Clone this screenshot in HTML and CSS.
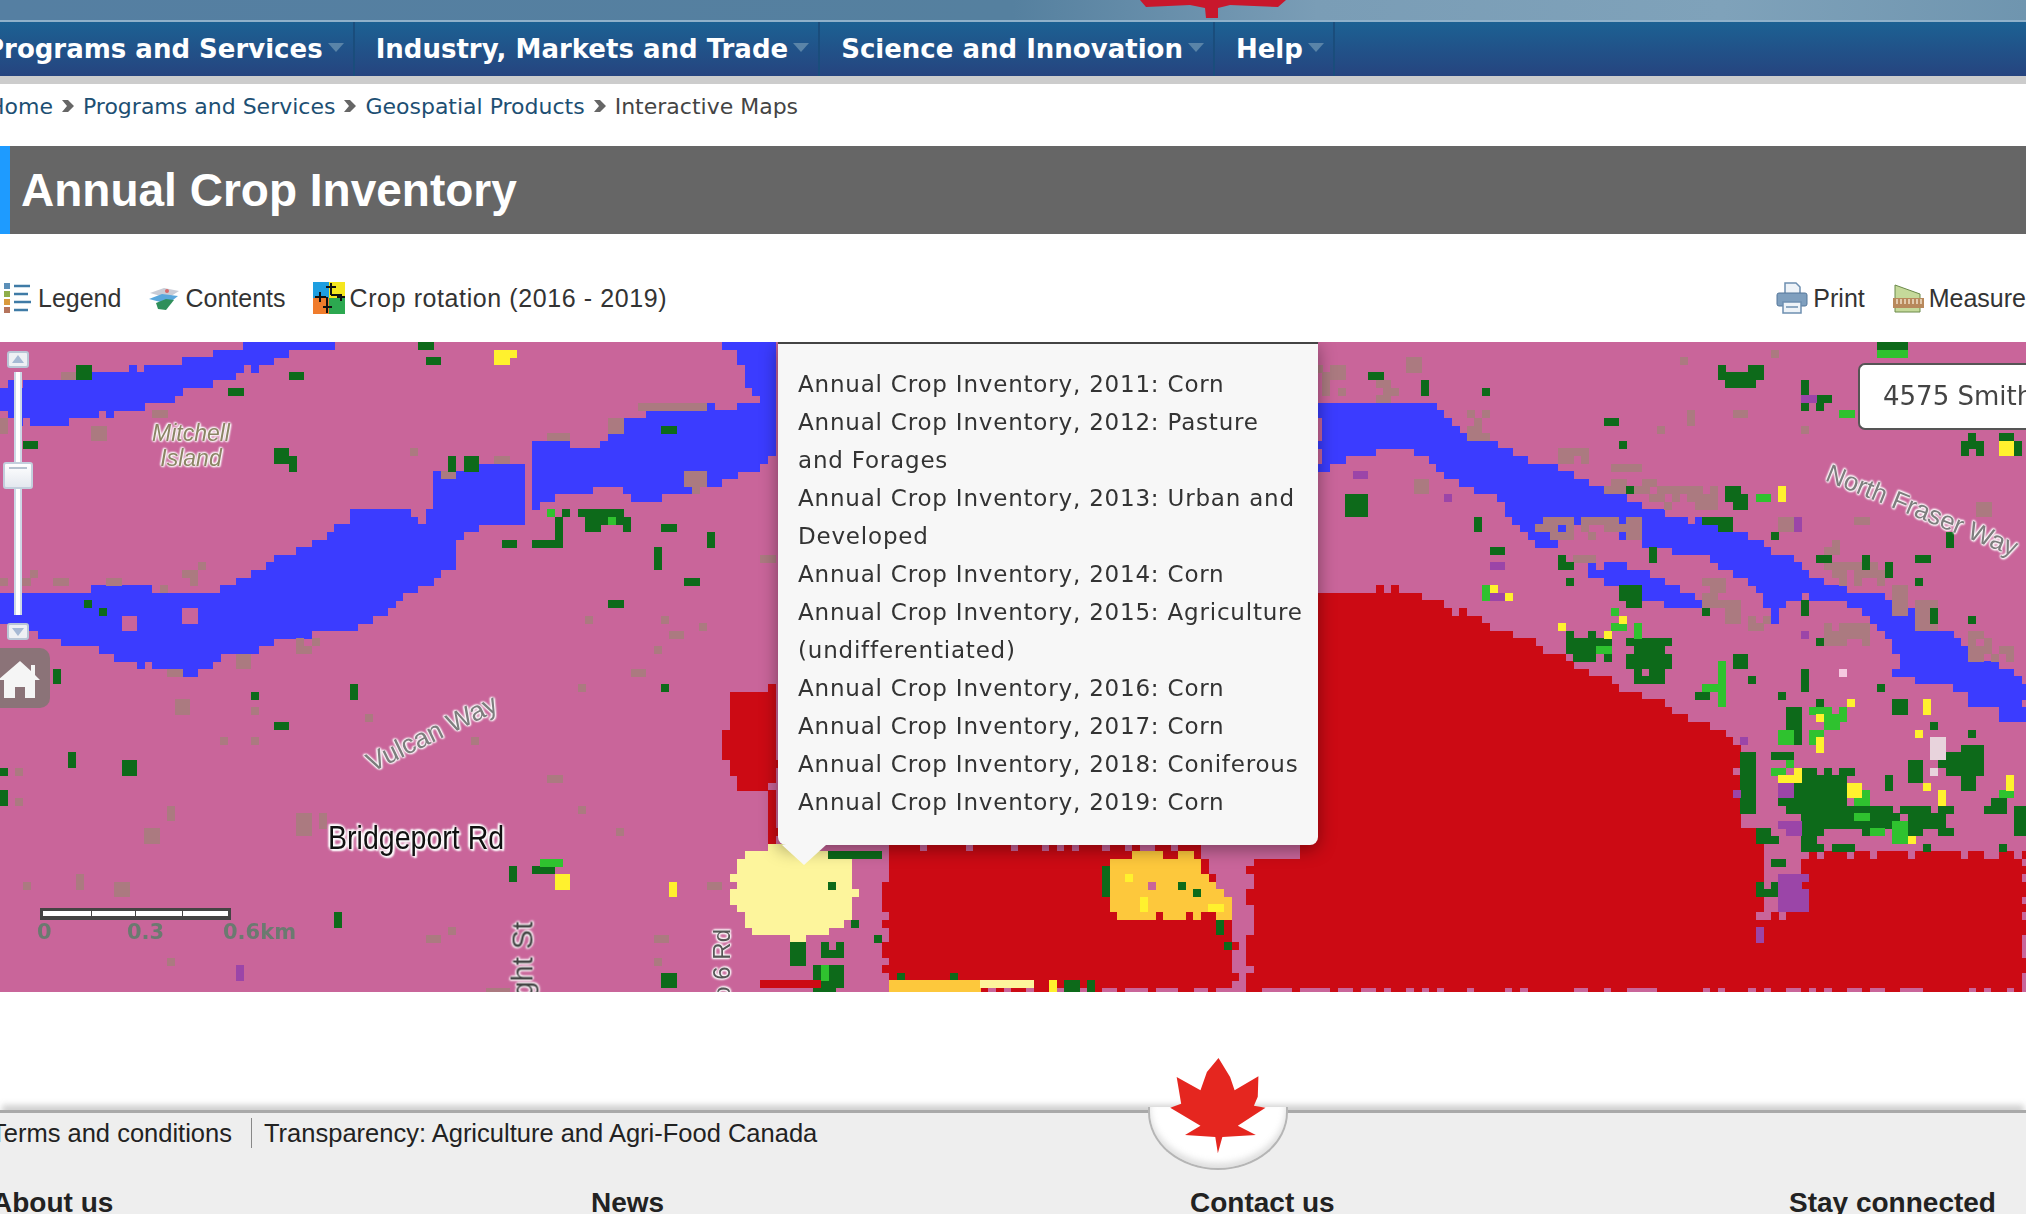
FILE: index.html
```html
<!DOCTYPE html>
<html lang="en">
<head>
    <meta charset="UTF-8">
    <meta name="viewport" content="width=device-width, initial-scale=1.0">
    <title>Annual Crop Inventory</title>
    <link rel="stylesheet" href="styles.css">
</head>
<body>

    <div class="top-band">
        <svg class="top-leaf" width="146" height="20" viewBox="0 0 146 20">
            <path d="M0 0H146L138 7L90 5L78 8L78 18H66L65 8L50 5L6 7Z" fill="#c8172c"/>
        </svg>
    </div>

    <nav class="main-nav">
        <a class="nav-item first" href="#">Programs and Services<span class="caret"></span></a>
        <a class="nav-item" href="#">Industry, Markets and Trade<span class="caret"></span></a>
        <a class="nav-item" href="#">Science and Innovation<span class="caret"></span></a>
        <a class="nav-item" href="#">Help<span class="caret"></span></a>
    </nav>

    <div class="breadcrumb">
        <a href="#">Home</a>
        <svg class="crumb-sep" width="14" height="14" viewBox="0 0 14 14"><path d="M1 1L7 1L13 7L7 13L1 13L6 7Z" fill="#666"/></svg>
        <a href="#">Programs and Services</a>
        <svg class="crumb-sep" width="14" height="14" viewBox="0 0 14 14"><path d="M1 1L7 1L13 7L7 13L1 13L6 7Z" fill="#666"/></svg>
        <a href="#">Geospatial Products</a>
        <svg class="crumb-sep" width="14" height="14" viewBox="0 0 14 14"><path d="M1 1L7 1L13 7L7 13L1 13L6 7Z" fill="#666"/></svg>
        <span>Interactive Maps</span>
    </div>

    <h1 class="page-title">Annual Crop Inventory</h1>

    <div class="toolbar">
        <div class="tool-group">
            <a class="tool" href="#">
                <svg width="30" height="32" viewBox="0 0 30 32">
                    <rect x="1" y="1" width="6" height="6" fill="#5b8fb8"/>
                    <rect x="1" y="9" width="6" height="6" fill="#8fae4a"/>
                    <rect x="1" y="17" width="6" height="6" fill="#d99a3c"/>
                    <rect x="1" y="25" width="6" height="6" fill="#b5745c"/>
                    <path d="M11 4H27M11 12H25M11 20H28M11 28H25" stroke="#3f7ba6" stroke-width="2.5"/>
                </svg>
                Legend
            </a>
            <a class="tool" href="#">
                <svg width="32" height="26" viewBox="0 0 32 26">
                    <path d="M2 8L16 3L31 6L20 13Z" fill="#c9ccd6"/>
                    <path d="M1 14L14 9L30 11L20 19Z" fill="#5aa7dc"/>
                    <path d="M8 18L18 14L26 15L18 25L10 24Z" fill="#2f8f5b"/>
                    <circle cx="19" cy="6" r="2" fill="#d96a6a"/>
                </svg>
                Contents
            </a>
            <a class="tool wide" href="#">
                <svg width="32" height="32" viewBox="0 0 32 32">
                    <rect width="16" height="16" fill="#1e9ee0"/>
                    <rect x="16" width="16" height="16" fill="#f5e61e"/>
                    <rect y="16" width="16" height="16" fill="#f07c2c"/>
                    <rect x="16" y="16" width="16" height="16" fill="#2ca850"/>
                    <path d="M18 1V13M13 5H23M18 13H28V19M24 15H32M2 15H13M7 10V20M14 15V31M10 25H19" stroke="#111" stroke-width="2" fill="none"/>
                </svg>
                Crop rotation (2016 - 2019)
            </a>
        </div>
        <div class="tool-group">
            <a class="tool" href="#">
                <svg width="32" height="32" viewBox="0 0 32 32">
                    <path d="M9 1H20L24 5V12H9Z" fill="#eef3f8" stroke="#6d8fb0" stroke-width="1.5"/>
                    <rect x="1" y="11" width="30" height="13" rx="2" fill="#7f9fbe" stroke="#55779a"/>
                    <rect x="7" y="20" width="18" height="11" fill="#eef3f8" stroke="#6d8fb0" stroke-width="1.5"/>
                    <path d="M10 25H22" stroke="#6d8fb0" stroke-width="1.5"/>
                </svg>
                Print
            </a>
            <a class="tool" href="#">
                <svg width="32" height="32" viewBox="0 0 32 32">
                    <path d="M3 3L28 12V30H3Z" fill="#c5d99a" stroke="#6b8a4a"/>
                    <rect x="1" y="16" width="31" height="10" fill="#b8895c"/>
                    <path d="M5 17V22M9 17V22M13 17V22M17 17V22M21 17V22M25 17V22M29 17V22" stroke="#f0e0c8" stroke-width="1.5"/>
                </svg>
                Measure
            </a>
        </div>
    </div>

    <div class="map">
        <canvas id="cropCanvas" class="map-canvas" width="2026" height="650"></canvas>

        <span class="map-label mitchell">Mitchell<br>Island</span>
        <span class="map-label vulcan">Vulcan Way</span>
        <span class="map-label bridgeport">Bridgeport Rd</span>
        <span class="map-label fraser">North Fraser Way</span>
        <span class="map-label wright">Wright St</span>
        <span class="map-label no6">No 6 Rd</span>

        <div class="zoom-bar">
            <div class="zoom-btn up"></div>
            <div class="zoom-track"></div>
            <div class="zoom-handle"></div>
            <div class="zoom-btn down"></div>
        </div>

        <div class="home-btn">
            <svg width="40" height="38" viewBox="0 0 40 38">
                <path d="M20 1L31 11V5H35V15L40 20H35V38H25V27H15V38H4V20H-2Z" fill="#f5f5f5"/>
            </svg>
        </div>

        <div class="scale">
            <div class="scale-bar"></div>
            <span class="scale-num s0">0</span>
            <span class="scale-num s1">0.3</span>
            <span class="scale-num s2">0.6km</span>
        </div>

        <div class="popup">
            <div>Annual Crop Inventory, 2011: Corn</div>
            <div>Annual Crop Inventory, 2012: Pasture and Forages</div>
            <div>Annual Crop Inventory, 2013: Urban and Developed</div>
            <div>Annual Crop Inventory, 2014: Corn</div>
            <div>Annual Crop Inventory, 2015: Agriculture (undifferentiated)</div>
            <div>Annual Crop Inventory, 2016: Corn</div>
            <div>Annual Crop Inventory, 2017: Corn</div>
            <div>Annual Crop Inventory, 2018: Coniferous</div>
            <div>Annual Crop Inventory, 2019: Corn</div>
        </div>

        <div class="address-box">4575 Smith</div>
    </div>

    <footer class="footer">
        <div class="footer-leaf">
            <svg width="103" height="98" viewBox="240 225 160 295" preserveAspectRatio="none">
                <path d="M320 228L338 285L345 325L382 283L381 345L375 372L393 378L350 432L378 460L326 466L319 515L315 466L268 460L292 432L245 378L262 366L255 285L292 325L302 270Z" fill="#e5261f"/>
            </svg>
        </div>
        <div class="footer-links">
            <a href="#">Terms and conditions</a>
            <a href="#">Transparency: Agriculture and Agri-Food Canada</a>
        </div>
        <div class="footer-cols">
            <h3>About us</h3>
            <h3>News</h3>
            <h3>Contact us</h3>
            <h3>Stay connected</h3>
        </div>
    </footer>

    <script src="map.js"></script>
</body>
</html>
```

FILE: styles.css
```css
html, body {
    margin: 0;
    padding: 0;
    height: 1214px;
    overflow: hidden;
    background: #fff;
}
body {
    font-family: "Liberation Sans", Arial, sans-serif;
    color: #333;
}
a {
    text-decoration: none;
    color: inherit;
}

/* banner + nav */
.top-band {
    position: relative;
    height: 20px;
    background: linear-gradient(to right, #557fa2, #55809f 50%, #7a9db6 65%, #7fa2ba 85%, #6f95af);
}
.top-leaf {
    position: absolute;
    left: 1140px;
    top: 0;
}
.main-nav {
    display: flex;
    height: 54px;
    border-top: 2px solid #8fb1ca;
    border-bottom: 8px solid #ccc;
    background: linear-gradient(to bottom, #1c6193, #26447f);
}
.nav-item {
    display: flex;
    align-items: center;
    padding: 0 9px 0 21px;
    border-right: 2px solid #1a4d7c;
    font-family: "DejaVu Sans", Verdana, sans-serif;
    font-weight: bold;
    font-size: 26px;
    color: #fff;
    height: 54px;
}
.nav-item.first {
    margin-left: -36px;
}
.caret {
    width: 0;
    height: 0;
    margin-left: 5px;
    margin-bottom: 4px;
    border-left: 8px solid transparent;
    border-right: 8px solid transparent;
    border-top: 9px solid #5a84a8;
}

.breadcrumb {
    display: flex;
    align-items: center;
    gap: 8px;
    height: 62px;
    padding-bottom: 18px;
    margin-left: -12px;
    box-sizing: border-box;
    font-family: "DejaVu Sans", Verdana, sans-serif;
    font-size: 22px;
    color: #444;
}
.breadcrumb a {
    color: #1d4f73;
}

.page-title {
    margin: 0;
    height: 88px;
    box-sizing: border-box;
    padding-left: 11px;
    border-left: 10px solid #1e9bff;
    background: #666;
    color: #fff;
    font-size: 46px;
    font-weight: bold;
    line-height: 88px;
}

/* tools above the map */
.toolbar {
    display: flex;
    justify-content: space-between;
    align-items: center;
    height: 108px;
    padding: 20px 0 0 3px;
    box-sizing: border-box;
    font-size: 25px;
    color: #333;
}
.tool-group {
    display: flex;
    gap: 27px;
}
.tool {
    display: flex;
    align-items: center;
    gap: 5px;
    white-space: nowrap;
}
.tool.wide {
    letter-spacing: 0.6px;
}

/* map */
.map {
    position: relative;
    height: 650px;
    overflow: hidden;
    background: #c9659a;
}
.map-canvas {
    display: block;
    width: 2026px;
    height: 650px;
    filter: blur(0.6px);
}
.map-label {
    position: absolute;
    white-space: nowrap;
    font-family: "Liberation Sans", Arial, sans-serif;
    color: #7d7d7d;
    text-shadow: 0 0 2px #fff, 0 0 2px #fff, 0 0 3px #fff, 1px 1px 2px #fff, -1px -1px 2px #fff;
}
.mitchell {
    left: 146px;
    top: 79px;
    width: 90px;
    font-size: 23px;
    line-height: 25px;
    font-style: italic;
    text-align: center;
    color: #8b8464;
}
.vulcan {
    left: 361px;
    top: 376px;
    font-size: 27px;
    transform: rotate(-26deg);
}
.bridgeport {
    left: 328px;
    top: 477px;
    font-size: 33px;
    color: #111;
    transform: scaleX(0.865);
    transform-origin: left center;
    text-shadow: 0 0 3px #fff, 0 0 3px #fff, 0 0 3px #fff, 0 0 4px #fff, 2px 2px 2px #fff, -2px -2px 2px #fff;
}
.fraser {
    left: 1820px;
    top: 153px;
    font-size: 26px;
    transform: rotate(22deg);
}
.wright {
    left: 468px;
    top: 627px;
    font-size: 29px;
    color: #444;
    transform: rotate(-90deg);
    transform-origin: center;
    width: 110px;
    text-align: right;
}
.no6 {
    left: 678px;
    top: 617px;
    font-size: 24px;
    color: #555;
    transform: rotate(-90deg);
    transform-origin: center;
}

.zoom-btn {
    position: absolute;
    left: 7px;
    width: 22px;
    height: 17px;
    box-sizing: border-box;
    border: 2px solid #b9c6d6;
    border-radius: 3px;
    background: #eef0f4;
}
.zoom-btn::after {
    content: "";
    position: absolute;
    left: 3px;
    width: 0;
    height: 0;
    border-left: 6px solid transparent;
    border-right: 6px solid transparent;
}
.zoom-btn.up {
    top: 9px;
}
.zoom-btn.up::after {
    top: 2px;
    border-bottom: 8px solid #a6b9d4;
}
.zoom-btn.down {
    top: 281px;
}
.zoom-btn.down::after {
    top: 3px;
    border-top: 8px solid #a6b9d4;
}
.zoom-track {
    position: absolute;
    left: 14px;
    top: 30px;
    width: 8px;
    height: 243px;
    box-sizing: border-box;
    border-left: 2px solid #cdd8e6;
    border-right: 2px solid #cdd8e6;
    background: #fff;
}
.zoom-handle {
    position: absolute;
    left: 3px;
    top: 120px;
    width: 30px;
    height: 27px;
    box-sizing: border-box;
    border: 2px solid #c3cfdd;
    border-radius: 3px;
    background: linear-gradient(to bottom, #fff, #e4e8ef);
}
.zoom-handle::after {
    content: "";
    position: absolute;
    left: 4px;
    top: 3px;
    width: 18px;
    height: 2px;
    background: #b6c2d0;
}
.home-btn {
    position: absolute;
    left: 0;
    top: 306px;
    width: 50px;
    height: 60px;
    padding-top: 12px;
    box-sizing: border-box;
    border-radius: 0 10px 10px 0;
    background: #8b7378;
}
.home-btn svg {
    display: block;
    overflow: visible;
}

.scale-bar {
    position: absolute;
    left: 40px;
    top: 566px;
    width: 191px;
    height: 12px;
    box-sizing: border-box;
    border: 3px solid #444;
    border-bottom-width: 4px;
    background: linear-gradient(to right, #fff 0 26%, #444 26% 26.5%, #fff 26.5% 50%, #444 50% 50.5%, #fff 50.5% 75%, #444 75% 75.5%, #fff 75.5%);
}
.scale-num {
    position: absolute;
    top: 578px;
    font-family: "DejaVu Sans", Verdana, sans-serif;
    font-weight: bold;
    font-size: 21px;
    color: #6b7a70;
}
.s0 { left: 37px; }
.s1 { left: 127px; }
.s2 { left: 223px; }

.popup {
    position: absolute;
    left: 778px;
    top: 0;
    width: 540px;
    height: 503px;
    box-sizing: border-box;
    padding: 21px 10px 0 20px;
    border-top: 2px solid #444;
    border-radius: 0 0 8px 8px;
    background: #f7f7f7;
    box-shadow: 0 4px 18px rgba(0, 0, 0, 0.4);
    font-family: "DejaVu Sans", Verdana, sans-serif;
    font-size: 23px;
    letter-spacing: 0.8px;
    line-height: 38px;
    color: #333;
}
.popup::after {
    content: "";
    position: absolute;
    left: 4px;
    top: 501px;
    width: 0;
    height: 0;
    border-left: 22px solid transparent;
    border-right: 22px solid transparent;
    border-top: 20px solid #f7f7f7;
}
.address-box {
    position: absolute;
    left: 1858px;
    top: 21px;
    width: 168px;
    height: 67px;
    box-sizing: border-box;
    padding-left: 23px;
    border: solid #555;
    border-width: 2px 0 2px 2px;
    border-radius: 7px 0 0 7px;
    background: #fff;
    font-family: "DejaVu Sans", Verdana, sans-serif;
    font-size: 26px;
    line-height: 63px;
    color: #444;
    white-space: nowrap;
    overflow: hidden;
}

/* footer */
.footer {
    position: relative;
    margin-top: 118px;
    height: 101px;
    border-top: 3px solid #a9a9a9;
    background: #eee;
    box-shadow: 0 -7px 6px -2px rgba(120, 120, 120, 0.35);
}
.footer-leaf {
    position: absolute;
    left: 1148px;
    top: -60px;
    width: 140px;
    height: 120px;
    box-sizing: border-box;
    display: flex;
    justify-content: center;
    padding-top: 4px;
}
.footer-leaf::before {
    content: "";
    position: absolute;
    left: 0;
    top: 54px;
    width: 140px;
    height: 63px;
    border: solid #b5b5b5;
    border-width: 0 2px 2px;
    box-sizing: border-box;
    border-radius: 0 0 70px 70px / 0 0 58px 58px;
    background: #fff;
    box-shadow: inset 0 -5px 6px rgba(150, 150, 150, 0.3);
}
.footer-leaf svg {
    position: relative;
}
.footer-links {
    display: flex;
    align-items: center;
    margin: 0 0 0 -9px;
    padding-top: 5px;
    height: 30px;
    font-size: 25.5px;
    color: #222;
}
.footer-links a {
    padding-right: 19px;
    line-height: 30px;
}
.footer-links a + a {
    padding-left: 12px;
    border-left: 1px solid #888;
}
.footer-cols {
    display: grid;
    grid-template-columns: repeat(4, 599px);
    margin: 39px 0 0 -8px;
}
.footer-cols h3 {
    margin: 0;
    font-size: 28px;
    line-height: 32px;
    color: #222;
}
```

FILE: map.js
```js
// crop inventory raster, drawn cell by cell so the edges stay blocky
var CELL = 7.6;
var MAP_TOP = 342;

var PINK = "#c9659a", BLUE = "#3b3cff", RED = "#cc0a14", PALE = "#fdf59c", ORANGE = "#fdc83c";
var GREEN = "#0d6a1a", LIME = "#2fc22f", YELLOW = "#fff12e", BROWN = "#ab7a80", PURPLE = "#9b45a8";

// big areas, page coordinates
var areas = [
    [BLUE, [[0,385],[60,378],[119,372],[199,357],[259,343],[338,342],[294,355],[259,366],[209,383],[164,400],[119,412],[85,421],[30,425],[0,414]]],
    [BLUE, [[0,593],[65,595],[114,583],[159,591],[209,595],[259,570],[299,548],[343,527],[363,506],[398,506],[428,523],[433,472],[522,459],[525,527],[473,527],[458,540],[455,565],[428,582],[383,617],[333,634],[299,636],[264,646],[224,655],[204,674],[159,668],[104,655],[50,638],[25,629],[0,625]]],
    [BLUE, [[532,442],[562,442],[577,451],[602,442],[627,414],[677,410],[746,406],[778,400],[778,455],[711,489],[667,493],[647,506],[612,485],[552,497],[532,510]]],
    [BLUE, [[726,342],[778,342],[778,421],[761,404],[746,383],[736,357]]],
    [BLUE, [[1318,403],[1427,403],[1459,430],[1511,450],[1607,490],[1646,510],[1712,523],[1777,550],[1817,580],[1887,597],[1952,637],[2026,680],[2026,723],[2009,723],[1952,687],[1896,673],[1896,640],[1852,603],[1804,597],[1773,620],[1760,590],[1712,560],[1646,543],[1589,520],[1546,550],[1519,530],[1502,500],[1467,487],[1400,445],[1318,470]]],
    [BLUE, [[1585,563],[1646,570],[1703,603],[1703,610],[1655,600],[1611,583],[1589,577]]],
    [RED, [[1250,860],[1250,992],[2026,992],[2026,853],[1804,853],[1804,905],[1790,915],[1765,915],[1760,837],[1740,823],[1738,747],[1729,733],[1690,717],[1646,697],[1602,677],[1559,655],[1515,637],[1471,617],[1427,598],[1377,587],[1340,592],[1300,590],[1300,860]]],
    [RED, [[886,846],[1200,846],[1234,940],[1234,992],[886,992]]],
    [RED, [[735,692],[778,689],[778,787],[738,787],[721,740]]],
    [RED, [[768,795],[778,795],[778,846],[768,846]]],
    [PALE, [[745,852],[790,845],[850,852],[856,905],[840,925],[800,940],[760,935],[733,910],[733,880]]],
    [ORANGE, [[1112,856],[1189,856],[1231,901],[1229,915],[1177,915],[1127,921],[1110,910]]]
];

// x, y, w, h
var specks = {};
specks[BROWN] = [[60,372,15,8],[149,410,17,8],[92,423,15,17],[0,421,9,17],[408,448,10,11],[440,468,12,11],[497,455,15,6],[547,436,20,6],[609,421,12,13],[642,404,65,8],[684,468,22,23],[0,568,40,13],[55,574,12,6],[104,574,12,6],[179,565,20,19],[162,583,10,8],[299,638,25,13],[234,655,15,13],[167,665,12,8],[174,700,12,13],[251,708,11,6],[363,714,10,6],[219,739,10,6],[251,739,10,6],[473,734,8,11],[12,765,10,6],[17,797,6,6],[164,808,10,13],[144,827,17,13],[294,816,15,21],[321,810,10,17],[545,778,12,11],[577,808,10,11],[614,827,11,6],[582,612,11,6],[659,612,5,11],[672,627,15,8],[699,621,6,6],[654,644,4,11],[632,665,12,6],[577,683,10,8],[761,551,17,8],[75,872,11,13],[112,878,17,15],[19,878,6,6],[427,936,12,11],[445,929,10,11],[169,961,10,11],[652,938,12,6],[654,957,10,8],[709,885,12,6],[490,985,20,7],
    [1607,480,57,13],[1646,490,70,20],[1532,520,109,23],[1782,513,22,17],[1852,513,18,10],[1817,537,22,13],[1826,563,61,20],[1896,587,18,27],[1917,603,26,27],[1966,630,26,13],[1970,643,56,17],[1703,577,26,27],[1727,597,18,20],[1751,617,22,13],[1821,623,44,20],[1979,503,13,17],[1414,480,18,13],[1572,558,22,7],[1318,367,30,27],[1375,383,26,20],[1678,360,10,10],[1769,347,10,10],[1407,360,13,13],[1685,410,10,17],[1733,410,16,10],[1659,427,10,7],[1804,427,10,7],[1466,413,26,30],[1556,450,39,13],[1614,467,32,10]];
specks[GREEN] = [[75,366,12,13],[418,342,12,9],[425,358,12,6],[288,370,12,6],[230,390,15,6],[24,441,12,6],[274,447,15,12],[289,453,11,13],[445,453,10,13],[463,453,14,13],[659,427,12,8],[545,510,20,38],[577,506,50,21],[500,536,15,6],[532,536,12,6],[664,525,12,11],[709,529,11,13],[657,548,8,26],[682,580,15,6],[607,599,12,6],[85,597,20,13],[50,670,11,17],[346,685,11,15],[662,682,9,11],[274,725,15,6],[69,753,11,12],[118,759,17,17],[506,866,8,13],[532,866,20,6],[337,910,8,13],[658,974,12,13],[0,789,4,13],[0,765,4,6],[254,693,8,6],
    [1347,497,22,25],[1476,513,11,13],[1487,547,13,10],[1559,558,5,13],[1567,563,7,8],[1563,578,6,5],[1618,583,20,25],[1563,630,48,28],[1624,640,44,42],[1624,490,7,10],[1646,547,7,13],[1699,513,13,8],[1721,513,13,12],[1727,487,26,20],[1771,530,11,10],[1817,552,18,10],[1865,553,11,18],[1887,565,7,12],[1915,553,18,10],[1944,533,11,12],[1915,578,5,10],[1933,608,11,13],[1970,617,6,10],[1799,600,7,18],[1815,635,6,10],[1699,608,11,7],[1731,652,13,13],[1751,673,11,5],[1804,667,9,23],[1777,690,11,5],[1878,684,11,5],[1893,697,13,12],[1922,710,11,5],[1933,723,11,10],[1970,728,11,10],[1788,703,18,40],[1815,697,4,13],[1771,753,22,7],[1738,750,18,57],[1795,770,57,57],[1777,793,22,20],[1843,803,109,33],[1882,772,11,12],[1909,760,18,20],[1939,747,42,27],[1957,773,13,17],[1987,800,26,13],[2014,807,12,30],[1799,827,26,23],[1830,842,22,10],[1756,828,22,12],[1771,855,15,10],[1756,878,20,13],[1922,843,4,10],[2000,842,5,10],[1694,690,13,5],
    [1717,365,45,23],[1798,377,6,13],[1801,397,29,17],[1878,343,32,6],[1607,415,16,10],[1620,440,8,10],[1482,390,10,10],[1420,383,10,13],[1369,370,13,10],[1962,433,26,23],[2001,433,25,20],
    [829,880,11,6],[852,919,11,11],[875,938,10,6],[817,945,19,13],[787,945,15,22],[814,964,31,30],[829,854,50,9],[1177,884,11,9],[1192,888,11,9],[1219,919,11,13],[1104,869,6,13],[1104,884,11,13],[1223,940,8,11],[1066,980,31,12],[894,975,11,9],[947,975,11,9]];
specks[LIME] = [[542,861,20,11],[547,510,10,5],[609,516,10,6],[1480,583,13,13],[1611,623,13,5],[1613,608,11,8],[1631,622,7,12],[1598,643,13,10],[1718,660,7,13],[1716,678,9,27],[1705,685,13,7],[1826,703,22,20],[1806,710,13,10],[1782,730,13,17],[1806,730,13,17],[1773,760,22,12],[1856,793,13,12],[1896,817,18,20],[1856,815,13,7],[1869,828,13,8],[2000,792,13,7],[1758,497,13,5],[1840,408,13,10],[1878,349,32,7],[819,964,11,13]];
specks[YELLOW] = [[495,346,25,12],[552,874,14,14],[671,885,7,13],[1775,483,7,12],[1491,585,9,5],[1506,590,7,7],[1557,623,11,5],[1618,617,7,10],[1600,634,11,5],[1843,697,7,8],[1815,717,6,10],[1820,735,6,12],[1920,697,6,12],[1915,728,11,10],[1926,783,11,10],[1941,792,11,12],[1843,783,13,13],[1775,772,13,5],[1795,766,11,5],[1793,778,6,5],[1906,837,6,10],[2003,778,7,13],[2001,440,12,12],[1123,871,11,9],[1143,893,11,13],[1212,901,15,9],[1045,980,10,12]];
specks[PURPLE] = [[236,968,8,13],[1804,392,16,7],[1353,470,16,7],[1493,592,13,10],[1491,563,13,8],[1445,497,11,10],[1782,780,13,17],[1780,817,26,18],[1795,515,11,12],[1799,628,7,10],[1738,737,7,10],[1736,787,9,10],[1777,863,27,44],[1756,930,9,16],[993,982,11,6],[1020,982,11,6]];
specks[PINK] = [[125,612,18,16],[185,610,12,16],[1150,882,10,11],[1756,910,15,10]];
specks["#f5c9e0"] = [[1839,667,11,5]];
specks["#e8d3dc"] = [[1928,735,13,20],[1930,767,5,5]];
specks[ORANGE] = [[890,980,92,12]];
specks[PALE] = [[982,984,50,8]];
specks[RED] = [[763,982,64,10]];

var canvas = document.getElementById("cropCanvas");
var ctx = canvas.getContext("2d");

// same numbers every load
var seed = 7;
function rnd() {
    seed = (seed * 16807) % 2147483647;
    return seed / 2147483647;
}

function inside(px, py, pts) {
    var hit = false;
    for (var i = 0, j = pts.length - 1; i < pts.length; j = i++) {
        var a = pts[i], b = pts[j];
        if ((a[1] > py) !== (b[1] > py) && px < (b[0] - a[0]) * (py - a[1]) / (b[1] - a[1]) + a[0]) {
            hit = !hit;
        }
    }
    return hit;
}

function cell(col, row, color) {
    ctx.fillStyle = color;
    ctx.fillRect(Math.round(col * CELL), Math.round(row * CELL), Math.ceil(CELL), Math.ceil(CELL));
}

ctx.fillStyle = PINK;
ctx.fillRect(0, 0, canvas.width, canvas.height);

areas.forEach(function (area) {
    for (var row = 0; row * CELL < canvas.height; row++) {
        for (var col = 0; col * CELL < canvas.width; col++) {
            // a little jitter so the edges come out stepped and uneven
            var px = col * CELL + CELL / 2 + (rnd() - 0.5) * 5;
            var py = row * CELL + CELL / 2 + MAP_TOP + (rnd() - 0.5) * 5;
            if (inside(px, py, area[1])) {
                cell(col, row, area[0]);
            }
        }
    }
});

Object.keys(specks).forEach(function (color) {
    // the solid field colours keep their blocks, the rest get ragged rims
    var solid = color === PINK || color === ORANGE || color === PALE || color === RED;
    specks[color].forEach(function (s) {
        var x0 = Math.round(s[0] / CELL);
        var y0 = Math.round((s[1] - MAP_TOP) / CELL);
        var cols = Math.max(1, Math.round(s[2] / CELL));
        var rows = Math.max(1, Math.round(s[3] / CELL));
        for (var r = 0; r < rows; r++) {
            for (var c = 0; c < cols; c++) {
                var rim = r === 0 || c === 0 || r === rows - 1 || c === cols - 1;
                var big = cols > 2 && rows > 1;
                var keep = color === BROWN ? 0.85 : 0.96;
                if (rim && big) keep -= 0.25;
                if (solid || !big || rnd() < keep) {
                    cell(x0 + c, y0 + r, color);
                }
            }
        }
    });
});
```
